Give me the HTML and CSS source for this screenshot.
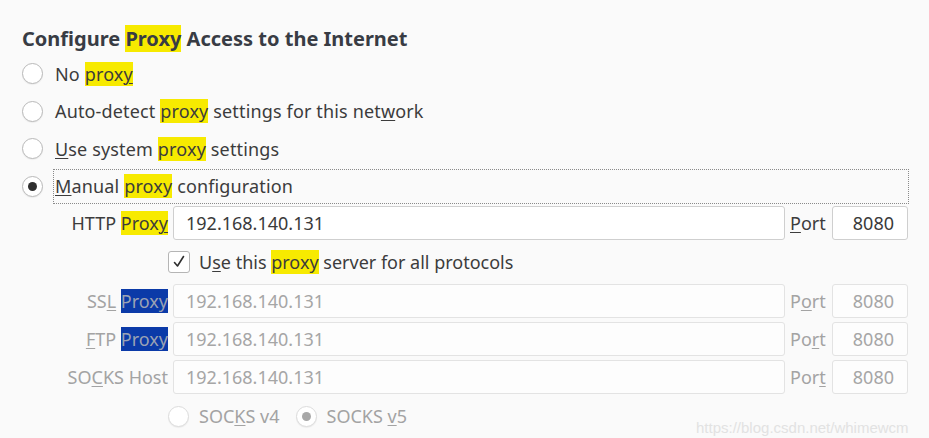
FILE: index.html
```html
<!DOCTYPE html>
<html>
<head>
<meta charset="utf-8">
<link rel="stylesheet" href="styles.css">
</head>
<body>
<div class="panel">
  <h1 class="title">Configure <span class="hl">Proxy</span> Access to the Internet</h1>

  <div class="radio-row">
    <span class="radio"></span>
    <span class="label">No <span class="hl">prox<u>y</u></span></span>
  </div>
  <div class="radio-row">
    <span class="radio"></span>
    <span class="label">Auto-detect <span class="hl">proxy</span> settings for this net<u>w</u>ork</span>
  </div>
  <div class="radio-row">
    <span class="radio"></span>
    <span class="label"><u>U</u>se system <span class="hl">proxy</span> settings</span>
  </div>
  <div class="radio-row manual">
    <span class="radio checked"></span>
    <span class="label focus"><u>M</u>anual <span class="hl">proxy</span> configuration</span>
  </div>

  <div class="grid">
    <div class="flabel">HTTP <span class="hl">Prox<u>y</u></span></div>
    <div class="input">192.168.140.131</div>
    <div class="plabel"><u>P</u>ort</div>
    <div class="input port">8080</div>

    <div class="check-row">
      <span class="checkbox"><svg width="14" height="14" viewBox="0 0 14 14"><path d="M2.5 7.5 L5.5 11 L11.5 1.5" fill="none" stroke="#2f2f2f" stroke-width="1.6" stroke-linecap="round" stroke-linejoin="round"/></svg></span>
      <span class="label">U<u>s</u>e this <span class="hl">proxy</span> server for all protocols</span>
    </div>

    <div class="flabel dis">SS<u>L</u> <span class="sel">Proxy</span></div>
    <div class="input dis">192.168.140.131</div>
    <div class="plabel dis">P<u>o</u>rt</div>
    <div class="input port dis">8080</div>

    <div class="flabel dis"><u>F</u>TP <span class="sel">Proxy</span></div>
    <div class="input dis">192.168.140.131</div>
    <div class="plabel dis">Po<u>r</u>t</div>
    <div class="input port dis">8080</div>

    <div class="flabel dis">SO<u>C</u>KS Host</div>
    <div class="input dis">192.168.140.131</div>
    <div class="plabel dis">Por<u>t</u></div>
    <div class="input port dis">8080</div>

    <div class="socks-row">
      <span class="radio dis"></span>
      <span class="label dis">SOC<u>K</u>S v4</span>
      <span class="radio dis checked v5"></span>
      <span class="label dis">SOCKS <u>v</u>5</span>
    </div>
  </div>
  <div class="watermark">https://blog.csdn.net/whimewcm</div>
</div>
</body>
</html>
```

FILE: styles.css
```css
html, body {
  margin: 0;
  padding: 0;
  background: #fafafa;
}
body {
  width: 929px;
  height: 438px;
  overflow: hidden;
  font-family: "Noto Sans", "Open Sans", sans-serif;
  font-size: 18px;
  color: #3c3c3c;
}
.panel {
  position: relative;
  padding: 24px 0 0 22px;
}
.title {
  margin: 0;
  height: 31px;
  line-height: 30px;
  font-size: 20px;
  font-weight: bold;
  color: #383c44;
}
.hl {
  background: #f7ea00;
}
.sel {
  background: #0b3aa8;
  color: #9aa2b4;
}
u {
  text-decoration: underline;
  text-decoration-thickness: 1px;
  text-underline-offset: 2px;
}
.radio-row {
  display: flex;
  align-items: center;
  height: 37.5px;
}
.radio {
  box-sizing: border-box;
  width: 21px;
  height: 21px;
  border-radius: 50%;
  border: 1px solid #b9b9b9;
  background: #fff;
  box-shadow: 0 1px 1px rgba(0,0,0,0.06);
  flex: none;
  position: relative;
}
.radio.checked::after {
  content: "";
  position: absolute;
  left: 5px;
  top: 5px;
  width: 9px;
  height: 9px;
  border-radius: 50%;
  background: #2f2f2f;
}
.radio.dis {
  border-color: #dcdcdc;
}
.radio.dis.checked::after {
  background: #a8a8a8;
}
.radio-row .label {
  margin-left: 12px;
  line-height: 24px;
  letter-spacing: 0.15px;
}
.manual .label.focus {
  margin-left: 10px;
  padding: 4px 0 4px 1px;
  flex: 1;
  margin-right: 20px;
  border: 1px dotted #8a8a8a;
  line-height: 25px;
}
.grid {
  display: grid;
  grid-template-columns: 101px 612px 37px 76px;
  grid-auto-rows: auto;
  column-gap: 5px;
  row-gap: 4px;
  margin-left: 45px;
  margin-top: 1px;
}
.flabel {
  text-align: right;
  line-height: 34px;
  height: 34px;
  white-space: nowrap;
}
.plabel {
  line-height: 34px;
  height: 34px;
  white-space: nowrap;
}
.input {
  box-sizing: border-box;
  height: 34px;
  border: 1px solid #cfcfcf;
  border-radius: 3px;
  background: #fff;
  padding: 0 12px;
  line-height: 32px;
  color: #3a3a3a;
}
.input.port {
  text-align: right;
  padding-right: 13px;
}
.input.dis {
  border-color: #e3e3e3;
  background: #fdfdfd;
  color: #a6a6a6;
}
.dis {
  color: #a3a3a3;
}
.check-row {
  grid-column: 2 / 5;
  display: flex;
  align-items: center;
  height: 36px;
  margin-left: -5px;
}
.check-row .label {
  margin-left: 9px;
}
.checkbox {
  box-sizing: border-box;
  width: 22px;
  height: 22px;
  border: 1px solid #b5b5b5;
  border-radius: 3px;
  background: #fff;
  display: flex;
  align-items: center;
  justify-content: center;
}
.socks-row {
  grid-column: 2 / 5;
  display: flex;
  align-items: center;
  height: 36px;
  margin-left: -5px;
}
.socks-row .label {
  margin-left: 10px;
}
.socks-row .v5 {
  margin-left: 16px;
}
.watermark {
  position: absolute;
  left: 696px;
  top: 419px;
  font-family: "Liberation Sans", Arial, sans-serif;
  font-size: 15px;
  color: #e2e2e2;
}
```
